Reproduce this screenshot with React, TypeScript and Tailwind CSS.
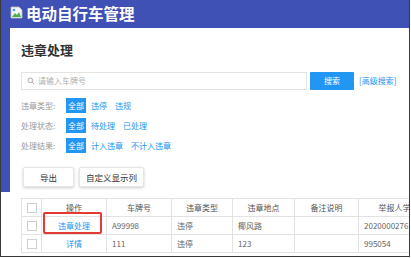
import React from 'react';

const font = { fontFamily: '"Noto Sans CJK SC", "Liberation Sans", sans-serif' };

const FilterRow: React.FC<{ label: string; options: string[] }> = ({ label, options }) => (
    <div className="flex h-[15px] items-center text-[8px]">
        <span className="w-[45px] text-[#9a9a9a]">{label}</span>
        <span className="flex h-[15px] w-[20px] items-center justify-center bg-[#2196f3] text-white">全部</span>
        <div className="ml-[5px] flex gap-[8px] text-[#2196f3]">
            {options.map((o) => (
                <span key={o}>{o}</span>
            ))}
        </div>
    </div>
);

const cols = [
    { w: 'w-[65px]', label: '操作' },
    { w: 'w-[65px]', label: '车牌号' },
    { w: 'w-[61px]', label: '违章类型' },
    { w: 'w-[62px]', label: '违章地点' },
    { w: 'w-[64px]', label: '备注说明' },
    { w: 'w-[80px]', label: '举报人学号' },
];

const rows = [
    ['违章处理', 'A99998', '违停', '椰风路', '', '2020000276'],
    ['详情', '111', '违停', '123', '', '995054'],
];

const Checkbox = () => <span className="block h-[10px] w-[10px] border border-[#cfcfcf] bg-white" />;

const App: React.FC = () => {
    return (
        <div className="relative h-[258px] w-[411px] overflow-hidden bg-white" style={font}>
            <div className="h-[257px] w-[410px] overflow-hidden border-r border-b border-l border-[#3a3a3a]">
                <header className="flex h-[28px] items-center bg-[#3f51b5] pl-[9px]">
                    <svg width="13" height="13" viewBox="0 0 13 13" className="mb-[4px]">
                        <path d="M1 1h8l3 3v8H1z" fill="#f4f4f4" stroke="#bdbdbd" strokeWidth="0.8" />
                        <path d="M2 11l3-4 2 2 2-3 2 5z" fill="#4caf50" />
                        <circle cx="4" cy="4" r="1.3" fill="#42a5f5" />
                    </svg>
                    <span className="ml-[3px] text-[15.5px] font-bold leading-none text-white">电动自行车管理</span>
                </header>
                <div className="flex">
                    <div className="h-[164px] w-[9px] shrink-0 bg-[#3f51b5]" />
                    <main className="min-w-0 flex-1 pl-[11px]">
                        <h1 className="pt-[14px] text-[13px] font-semibold leading-[16px] text-[#333]">违章处理</h1>
                        <div className="mt-[14px] flex h-[18px] items-center">
                            <div className="flex h-[18px] w-[286px] items-center border border-[#e3e3e3] pl-[5px]">
                                <svg width="8" height="8" viewBox="0 0 24 24" fill="none" stroke="#9e9e9e" strokeWidth="2.5">
                                    <circle cx="10" cy="10" r="7" />
                                    <path d="M15 15l6 6" />
                                </svg>
                                <span className="ml-[3px] text-[8px] text-[#b0b0b0]">请输入车牌号</span>
                            </div>
                            <span className="ml-[3px] flex h-[18px] w-[44px] items-center justify-center rounded-[1px] bg-[#2196f3] text-[8px] text-white">搜索</span>
                            <span className="ml-[5px] text-[8px] text-[#2196f3]">[高级搜索]</span>
                        </div>
                        <div className="mt-[8px] flex flex-col gap-[5px]">
                            <FilterRow label="违章类型:" options={['违停', '违规']} />
                            <FilterRow label="处理状态:" options={['待处理', '已处理']} />
                            <FilterRow label="处理结果:" options={['计入违章', '不计入违章']} />
                        </div>
                        <div className="mt-[14px] ml-[2px] flex gap-[5px] text-[8.5px] text-[#333]">
                            <span className="flex h-[20px] w-[51px] items-center justify-center rounded-[2px] border border-[#e6e6e6] bg-white shadow-[0_1px_3px_rgba(0,0,0,0.2)]">导出</span>
                            <span className="flex h-[20px] w-[65px] items-center justify-center rounded-[2px] border border-[#e6e6e6] bg-white shadow-[0_1px_3px_rgba(0,0,0,0.2)]">自定义显示列</span>
                        </div>
                        <div className="mt-[11px] w-[430px] border-t border-l border-[#e2e2e2] text-[8px]">
                            <div className="flex h-[18px] border-b border-[#e2e2e2] text-[#555]">
                                <div className="flex w-[20px] shrink-0 items-center justify-center border-r border-[#e2e2e2]">
                                    <Checkbox />
                                </div>
                                {cols.map((c) => (
                                    <div key={c.label} className={`${c.w} flex shrink-0 items-center justify-center border-r border-[#e2e2e2]`}>
                                        {c.label}
                                    </div>
                                ))}
                            </div>
                            {rows.map((r, i) => (
                                <div key={i} className="flex h-[18px] border-b border-[#e2e2e2] text-[#666]">
                                    <div className="flex w-[20px] shrink-0 items-center justify-center border-r border-[#e2e2e2]">
                                        <Checkbox />
                                    </div>
                                    {r.map((v, j) => (
                                        <div
                                            key={j}
                                            className={`${cols[j].w} flex shrink-0 items-center border-r border-[#e2e2e2] ${j === 0 ? 'justify-center text-[#2196f3]' : 'pl-[5px]'}`}
                                        >
                                            {v}
                                        </div>
                                    ))}
                                </div>
                            ))}
                        </div>
                    </main>
                </div>
            </div>
            <div className="absolute top-[212px] left-[43px] h-[22px] w-[59px] rounded-[2px] border-2 border-[#e53935]" />
        </div>
    );
};

export default App;
